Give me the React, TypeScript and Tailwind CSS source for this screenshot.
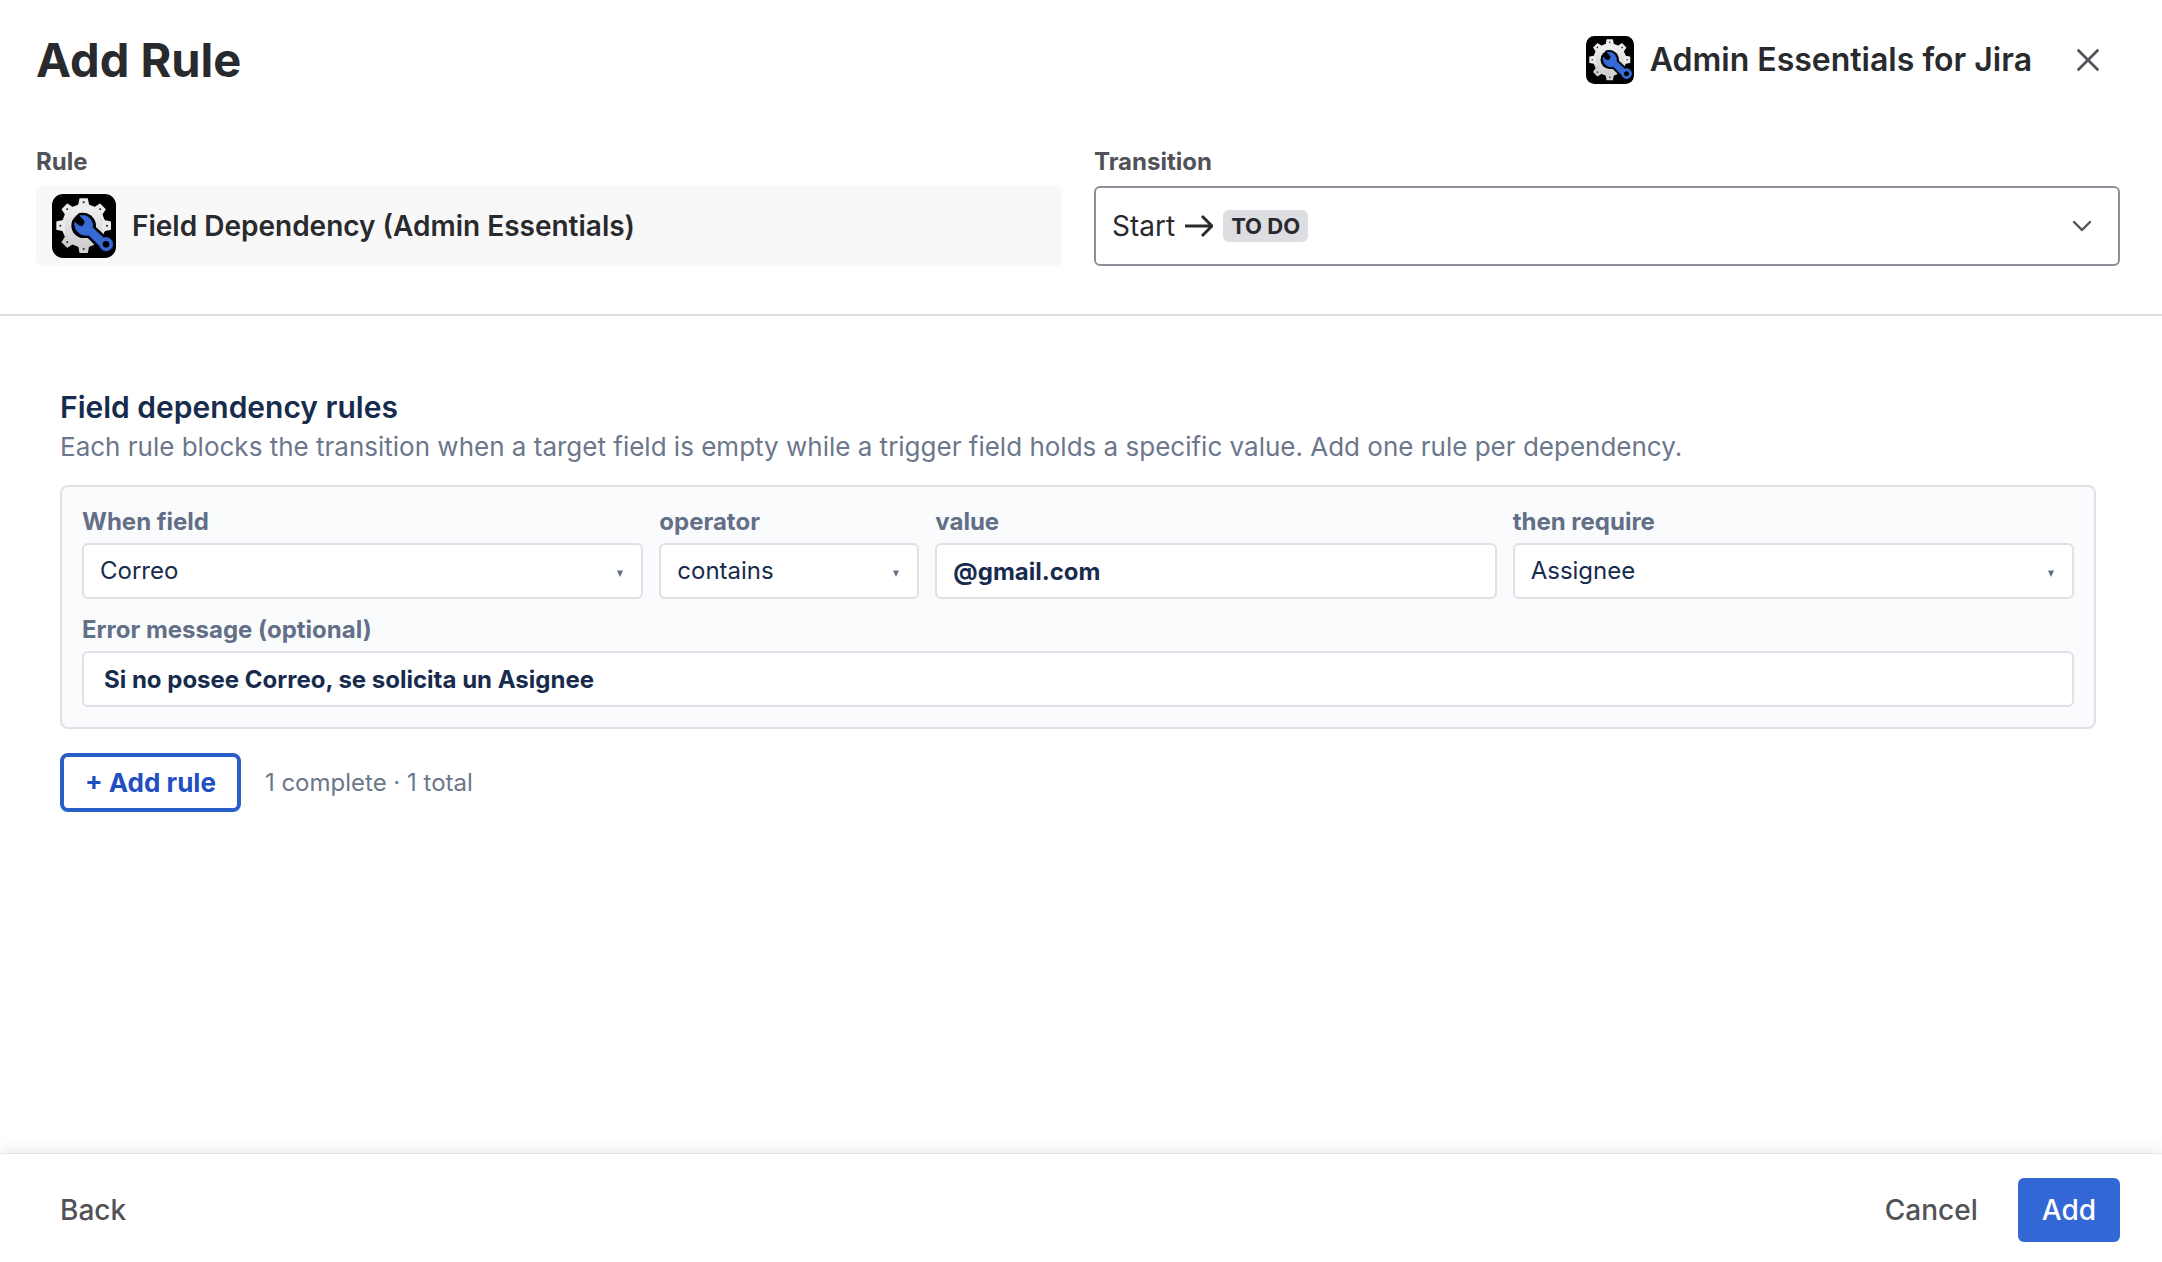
import React from "react";

const WRENCH =
  "M84 65C106 61 124 76 122 101L155 132A20 20 0 1 1 143 156L110 123C86 128 66 110 68 85L82 96Q90 100 95 93Q101 86 97 79Z";

const AppLogo = ({ className }: { className: string }) => (
  <svg viewBox="0 0 192 192" className={className} aria-hidden="true">
    <defs>
      <linearGradient id="gear" x1="0" y1="0" x2="0" y2="1">
        <stop offset="0" stopColor="#f2f2f2" />
        <stop offset="1" stopColor="#cdcdcd" />
      </linearGradient>
    </defs>
    <rect width="192" height="192" rx="34" fill="#000" />
    <circle cx="95" cy="95" r="65" fill="url(#gear)" />
    {[0, 45, 90, 180, 225, 270, 315].map((deg) => (
      <g key={deg} transform={`rotate(${deg} 95 95)`}>
        <path
          d="M84 13h22q2 0 2 2l3 16 10 8H69l10-8 3-16q0-2 2-2z"
          fill={deg > 90 && deg < 270 ? "#d0d0d0" : "#ebebeb"}
        />
        <circle cx="95" cy="25" r="3" fill="#222" />
      </g>
    ))}
    <circle cx="95" cy="95" r="37" fill="#000" />
    <path d={WRENCH} stroke="#000" strokeWidth="16" strokeLinejoin="round" />
    <path
      d={WRENCH}
      fill="#386ad6"
      stroke="#2c5cc4"
      strokeWidth="3"
      strokeLinejoin="round"
    />
    <circle cx="162" cy="151" r="10" fill="#000" />
  </svg>
);

type SelectFieldProps = {
  id: string;
  label: string;
  value: string;
};

const labelClass = "text-2xl leading-[30px] font-bold text-[#626f86]";
const controlClass =
  "h-14 w-full rounded-md border-2 border-[#dfe1e6] bg-white text-2xl text-[#172b4d] outline-none";

const SelectField = ({ id, label, value }: SelectFieldProps) => (
  <div className="flex min-w-0 flex-col gap-1.5">
    <label htmlFor={id} className={labelClass}>
      {label}
    </label>
    <div className="relative">
      <select
        id={id}
        defaultValue={value}
        className={`${controlClass} appearance-none px-4`}
      >
        <option>{value}</option>
      </select>
      <svg
        viewBox="0 0 6 7"
        className="pointer-events-none absolute top-[27px] right-5 h-[7px] w-[6px]"
        aria-hidden="true"
      >
        <path d="M0 0.5h6L3 7z" fill="#626f86" />
      </svg>
    </div>
  </div>
);

const Header = () => (
  <header className="border-b-2 border-[#dddee1] pt-9 pr-[42px] pb-12 pl-9">
    <div className="flex h-12 items-center justify-between">
      <h1 className="text-[47px] leading-[48px] font-bold text-[#292a2e]">
        Add Rule
      </h1>
      <div className="flex items-center">
        <AppLogo className="h-12 w-12" />
        <span className="ml-4 text-[32px] leading-10 font-semibold text-[#292a2e]">
          Admin Essentials for Jira
        </span>
        <button
          type="button"
          aria-label="Close"
          className="ml-6 flex h-16 w-16 items-center justify-center"
        >
          <svg viewBox="0 0 24 24" className="h-6 w-6" fill="none">
            <path
              d="M2.5 2.5l19 19M21.5 2.5l-19 19"
              stroke="#505258"
              strokeWidth="2.8"
              strokeLinecap="round"
            />
          </svg>
        </button>
      </div>
    </div>

    <div className="mt-[62px] grid grid-cols-2 gap-8">
      <div>
        <div className="mb-2 text-2xl font-bold text-[#505258]">Rule</div>
        <div className="flex h-20 items-center gap-4 rounded-md bg-[#f8f8f8] px-4">
          <AppLogo className="h-16 w-16" />
          <span className="text-[28px] font-semibold text-[#292a2e]">
            Field Dependency (Admin Essentials)
          </span>
        </div>
      </div>
      <div>
        <label
          htmlFor="transition"
          className="mb-2 block text-2xl font-bold text-[#505258]"
        >
          Transition
        </label>
        <div className="relative flex h-20 items-center rounded-md border-2 border-[#8c8f97] bg-white pr-[26px] pl-4 text-[#292a2e]">
          <span className="text-[28px]">Start</span>
          <svg viewBox="0 0 28 24" className="mx-2.5 h-6 w-7" fill="none">
            <path
              d="M0 12h26M17 2l10 10-10 10"
              stroke="#292a2e"
              strokeWidth="3"
              strokeLinejoin="round"
            />
          </svg>
          <span className="rounded-md bg-[#dddee1] px-2 text-[22px] leading-8 font-bold">
            TO DO
          </span>
          <svg
            viewBox="0 0 20 12"
            className="ml-auto h-3 w-5"
            fill="none"
          >
            <path
              d="M2 2l8 8 8-8"
              stroke="#505258"
              strokeWidth="2.4"
              strokeLinecap="round"
              strokeLinejoin="round"
            />
          </svg>
          <select
            id="transition"
            className="absolute inset-0 h-full w-full cursor-pointer opacity-0"
          >
            <option>Start → TO DO</option>
          </select>
        </div>
      </div>
    </div>
  </header>
);

const RuleCard = () => (
  <div className="mt-[18px] flex flex-col gap-4 rounded-lg border-2 border-[#dfe1e6] bg-[#fafbfd] p-5">
    <div className="grid grid-cols-[1fr_260px_1fr_1fr] gap-4">
      <SelectField id="when-field" label="When field" value="Correo" />
      <SelectField id="operator" label="operator" value="contains" />
      <div className="flex min-w-0 flex-col gap-1.5">
        <label htmlFor="value" className={labelClass}>
          value
        </label>
        <input
          id="value"
          type="text"
          defaultValue="@gmail.com"
          className={`${controlClass} px-4 font-bold`}
        />
      </div>
      <SelectField id="then-require" label="then require" value="Assignee" />
    </div>
    <div className="flex flex-col gap-1.5">
      <label htmlFor="error-message" className={labelClass}>
        Error message (optional)
      </label>
      <input
        id="error-message"
        type="text"
        defaultValue="Si no posee Correo, se solicita un Asignee"
        className={`${controlClass} px-5 font-bold`}
      />
    </div>
  </div>
);

const Footer = () => (
  <footer className="flex items-center justify-between bg-white pt-6 pr-[42px] pb-5 pl-[60px] text-[28px] font-medium text-[#505258] shadow-[0_0_16px_rgba(30,31,33,0.15),0_0_1px_rgba(30,31,33,0.3)]">
    <button type="button">Back</button>
    <div className="flex items-center gap-4">
      <button type="button" className="h-16 px-6">
        Cancel
      </button>
      <button
        type="button"
        className="h-16 rounded-md bg-[#3367d6] px-6 text-white"
      >
        Add
      </button>
    </div>
  </footer>
);

const App = () => {
  return (
    <div className="flex min-h-screen flex-col bg-white font-['Inter',sans-serif]">
      <Header />
      <main className="flex-1 px-[60px] pt-[71px] pr-[66px]">
        <h2 className="text-[30px] leading-10 font-semibold text-[#172b4d]">
          Field dependency rules
        </h2>
        <p className="text-[26px] leading-10 text-[#6b778c]">
          Each rule blocks the transition when a target field is empty while a
          trigger field holds a specific value. Add one rule per dependency.
        </p>
        <RuleCard />
        <div className="mt-6 flex items-center gap-6">
          <button
            type="button"
            className="h-[59px] rounded-lg border-4 border-[#2a5fc9] bg-white px-[21px] text-[26px] font-bold text-[#1f4fc0]"
          >
            + Add rule
          </button>
          <span className="text-2xl text-[#6b778c]">1 complete · 1 total</span>
        </div>
      </main>
      <Footer />
    </div>
  );
};

export default App;
